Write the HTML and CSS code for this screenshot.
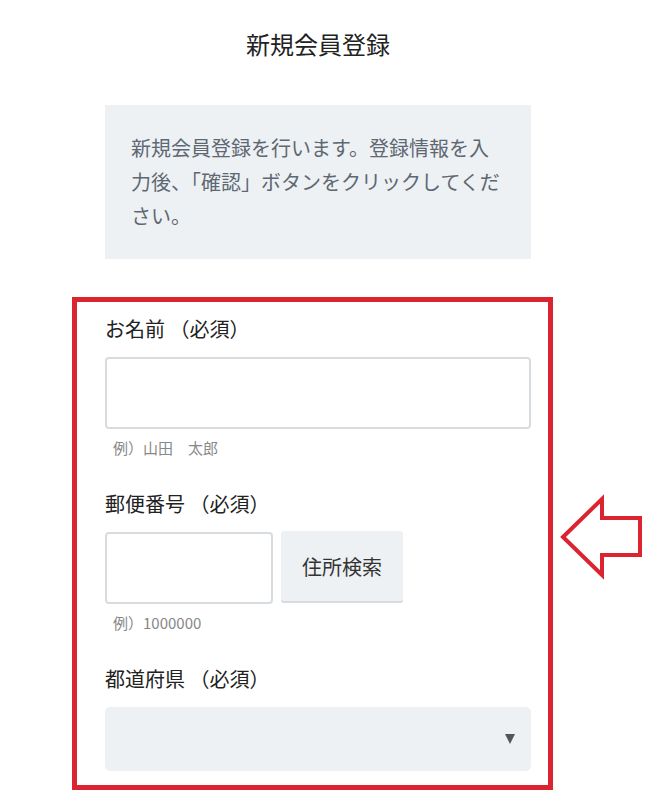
FILE: index.html
```html
<!DOCTYPE html>
<html lang="ja">
<head>
<meta charset="utf-8">
<title>新規会員登録</title>
<link rel="stylesheet" href="styles.css">
</head>
<body>
<main class="page">
  <h1 class="title">新規会員登録</h1>
  <p class="notice">新規会員登録を行います。登録情報を入力後、「確認」ボタンをクリックしてください。</p>
  <form class="form">
    <div class="field">
      <label class="label" for="name">お名前 （必須）</label>
      <input class="input" id="name" type="text">
      <p class="hint">例）山田　太郎</p>
    </div>
    <div class="field">
      <label class="label" for="zip">郵便番号 （必須）</label>
      <div class="zip-row">
        <input class="input input-zip" id="zip" type="text">
        <button class="search-btn" type="button">住所検索</button>
      </div>
      <p class="hint">例）1000000</p>
    </div>
    <div class="field">
      <label class="label" for="pref">都道府県 （必須）</label>
      <div class="select-wrap">
        <select class="select" id="pref"><option></option></select>
        <svg class="select-caret" width="10" height="10" viewBox="0 0 10 10"><polygon points="0,0 10,0 5,10" fill="#555"/></svg>
      </div>
    </div>
  </form>
</main>
<div class="highlight-frame"></div>
<svg class="highlight-arrow" width="88" height="88" viewBox="0 0 88 88">
  <polygon points="5,43 44,5 44,24 82,24 82,61 44,61 44,81" fill="#fff" stroke="#db2430" stroke-width="4" stroke-linejoin="miter"/>
</svg>
</body>
</html>
```

FILE: styles.css
```css
html, body {
  margin: 0;
  padding: 0;
  background: #fff;
}
body {
  font-family: "Noto Sans CJK JP", "Noto Sans", sans-serif;
  color: #222;
  width: 648px;
  height: 800px;
  overflow: hidden;
  position: relative;
}
.page {
  margin-left: 105px;
  width: 426px;
  padding-top: 26px;
}
.title {
  margin: 0;
  font-size: 24px;
  line-height: 36px;
  font-weight: 400;
  text-align: center;
  color: #222;
}
.notice {
  margin: 43px 0 0;
  background: #eef1f4;
  padding: 26px;
  font-size: 20px;
  line-height: 34px;
  color: #5d6872;
}
.form {
  margin-top: 56px;
}
.field {
  margin-bottom: 31px;
}
.label {
  display: block;
  font-size: 20px;
  line-height: 28px;
  color: #222;
  margin-bottom: 14px;
}
.input {
  display: block;
  box-sizing: border-box;
  width: 100%;
  height: 72px;
  border: 2px solid #d6dcdf;
  border-radius: 4px;
  background: #fff;
  margin: 0;
  padding: 0 12px;
  font: inherit;
}
.hint {
  margin: 8px 0 0;
  padding-left: 8px;
  font-size: 15px;
  line-height: 22px;
  color: #888;
}
.zip-row {
  display: flex;
  align-items: flex-start;
  gap: 8px;
}
.input-zip {
  width: 168px;
  flex: none;
  height: 72px;
}
.search-btn {
  width: 122px;
  height: 70px;
  margin-top: -1px;
  border: none;
  border-radius: 3px;
  background: #eef1f4;
  box-shadow: 0 2px 0 #d6dbdf;
  font-family: inherit;
  font-size: 20px;
  color: #333;
  padding: 0;
}
.select-wrap {
  display: grid;
  align-items: center;
}
.select {
  grid-area: 1 / 1;
  appearance: none;
  -webkit-appearance: none;
  width: 100%;
  height: 64px;
  border: none;
  border-radius: 5px;
  background: #eef1f4;
  font: inherit;
  margin: 0;
}
.select-caret {
  grid-area: 1 / 1;
  justify-self: end;
  margin-right: 16px;
  pointer-events: none;
}
.highlight-frame {
  position: absolute;
  left: 72px;
  top: 297px;
  width: 481px;
  height: 493px;
  box-sizing: border-box;
  border: 5px solid #db2430;
  pointer-events: none;
}
.highlight-arrow {
  position: absolute;
  left: 558px;
  top: 494px;
}
```
